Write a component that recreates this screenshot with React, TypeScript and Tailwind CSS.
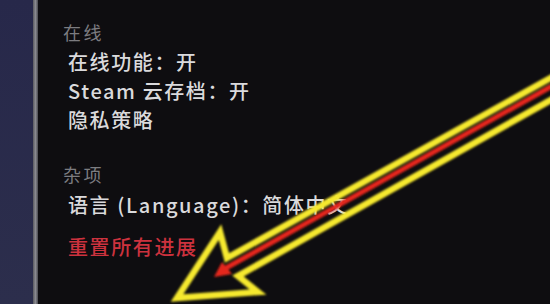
import React from 'react';

const cjk = { fontFamily: '"Noto Sans CJK SC", "Noto Sans", sans-serif' };

function Header({ children }: { children: React.ReactNode }) {
  return <div className="pl-[25px] h-[28px] leading-[28px] text-[18px] tracking-[2.5px] text-[#7c7c80]">{children}</div>;
}

function Item({ children, red }: { children: React.ReactNode; red?: boolean }) {
  return (
    <div className={`pl-[30px] h-[29px] leading-[29px] text-[20px] tracking-[1.6px] font-medium ${red ? 'text-[#cc323e]' : 'text-[#dadadc]'}`}>
      {children}
    </div>
  );
}

export default function App() {
  return (
    <main className="relative w-[550px] h-[304px] overflow-hidden flex bg-[#0e0d10]" style={cjk}>
      {/* left side strip */}
      <div className="w-[33px] h-full bg-gradient-to-b from-[#27284a] to-[#2c2e4c]" />
      <div className="w-[5px] h-full bg-gradient-to-r from-[#5a5a60] via-[#8a8a90] to-[#4a4a50]" />

      <div className="flex-1 flex flex-col pt-[18px]">
        <Header>在线</Header>
        <div className="mt-[1px]">
          <Item>在线功能：开</Item>
          <Item>Steam 云存档：开</Item>
          <Item>隐私策略</Item>
        </div>

        <div className="mt-[26px]">
          <Header>杂项</Header>
        </div>
        <div className="mt-[2px]">
          <Item>语言 (Language)：简体中文</Item>
        </div>
        <div className="mt-[13px]">
          <Item red>重置所有进展</Item>
        </div>
      </div>

      {/* annotation arrow */}
      <svg className="absolute inset-0 pointer-events-none" width="550" height="304" viewBox="0 0 550 304">
        <defs>
          <filter id="glow" x="-20%" y="-20%" width="140%" height="140%">
            <feGaussianBlur stdDeviation="1.3" />
          </filter>
        </defs>
        <g filter="url(#glow)">
          <polyline
            points="565,70 227,258 220,232 177,298 258,292 238,276 565,92"
            fill="none"
            stroke="#f6e92e"
            strokeWidth="6.5"
            strokeLinejoin="miter"
          />
          <line x1="552" y1="86" x2="226" y2="268" stroke="#e5281c" strokeWidth="5" />
          <polygon points="214,277 222,262 232,274" fill="#e5281c" />
        </g>
      </svg>
    </main>
  );
}
